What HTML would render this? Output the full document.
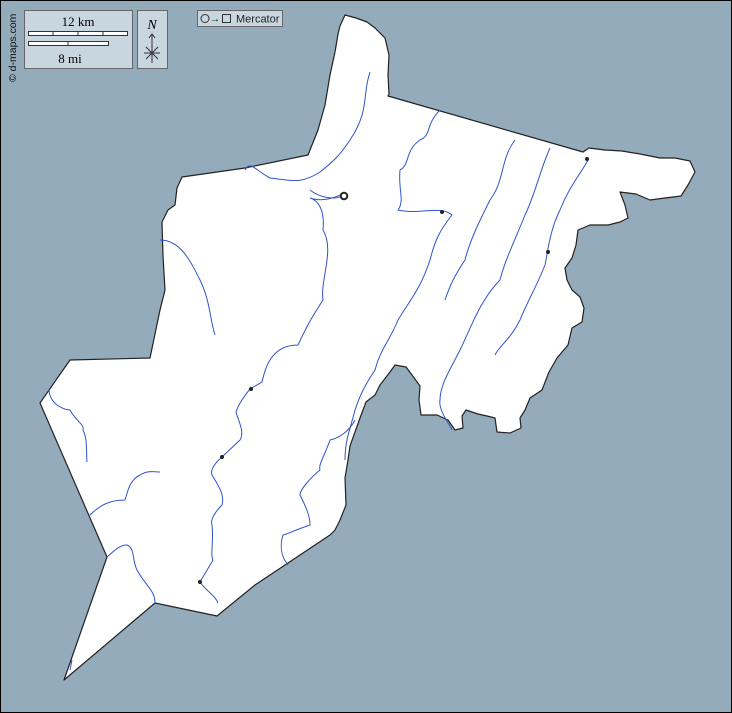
<!DOCTYPE html>
<html><head><meta charset="utf-8"><style>
html,body{margin:0;padding:0;background:#94abbb;}
svg{display:block}
</style></head><body>
<svg width="732" height="713" viewBox="0 0 732 713" xmlns="http://www.w3.org/2000/svg">
<rect x="0" y="0" width="732" height="713" fill="#94abbb"/>
<rect x="0.5" y="0.5" width="731" height="712" fill="none" stroke="#000" stroke-width="1"/>
<path d="M340,26 L345,15 L356,18 L367,22 L375,28 L385,38 L389,55 L388,75 L389,94 L388,96 L583,152 L589,148 L605,150 L622,151 L640,154 L660,158 L675,158 L690,161 L695,172 L688,185 L681,196 L665,198 L650,200 L636,194 L620,192 L625,205 L628,218 L620,222 L608,225 L590,225 L578,230 L576,245 L572,258 L565,268 L567,280 L572,290 L580,297 L584,308 L582,322 L572,328 L568,345 L557,358 L549,372 L542,390 L530,398 L525,410 L520,418 L521,428 L510,433 L497,432 L495,418 L487,416 L478,414 L466,410 L462,416 L463,428 L455,430 L448,420 L437,415 L421,415 L419,400 L420,386 L412,375 L406,367 L395,365 L390,372 L380,385 L375,395 L366,402 L360,418 L355,432 L350,446 L348,460 L345,478 L346,505 L340,520 L335,530 L330,535 L300,555 L285,565 L255,585 L217,616 L155,603 L64,680 L107,557 L40,403 L70,360 L150,358 L160,310 L165,290 L163,256 L162,222 L168,210 L175,205 L177,188 L182,177 L245,168 L308,155 L318,130 L325,105 L330,75 L335,52 L338,34 Z" fill="#fff" stroke="#222" stroke-width="1.2" stroke-linejoin="round"/>
<g fill="none" stroke="#2f54c9" stroke-width="1">
<path d="M370,72 C362,95 370,110 350,140 C340,155 335,160 320,172 C300,185 290,180 270,178 C255,170 250,160 245,170"/>
<path d="M310,190 C320,198 335,200 342,196 C350,188 330,205 310,198 C318,200 325,210 323,230 C335,250 320,280 323,300 C310,320 305,330 298,345 C270,345 265,370 262,382 L250,389 C245,395 238,405 236,412 C238,420 245,432 240,440 L222,457 C215,463 210,470 212,475 C218,485 225,495 222,505 C215,512 210,520 212,525 C214,540 210,555 213,560 L200,582 C205,590 215,595 218,603"/>
<path d="M440,110 C425,125 432,135 420,140 C405,150 410,165 400,170 C398,190 405,200 398,210 C420,215 440,205 452,215 C440,230 435,240 430,260 C420,290 410,300 398,320 C390,340 380,350 375,370 C365,385 360,395 355,410 C350,430 345,440 345,460"/>
<path d="M515,140 C500,160 505,180 490,200 C480,220 470,240 465,260 C455,275 450,285 445,300"/>
<path d="M550,148 C540,170 535,195 525,215 C515,240 505,260 500,280 C480,300 470,330 460,350 C450,370 440,385 440,400 C438,410 450,425 452,430"/>
<path d="M588,160 C580,175 570,185 560,210 C550,230 548,250 545,265 C535,290 528,300 520,320 C510,340 500,345 495,355"/>
<path d="M160,240 C180,240 190,260 200,280 C210,300 210,320 215,335"/>
<path d="M49,390 C50,405 65,410 70,410 C75,420 85,425 83,430 C88,440 86,455 87,462"/>
<path d="M90,515 C100,505 110,500 125,500 C128,490 130,480 140,475 C148,470 155,472 160,472"/>
<path d="M107,557 C115,550 120,545 127,545 C135,548 132,560 137,570 C145,585 155,590 155,603"/>
<path d="M355,420 C350,430 340,438 330,440 C325,455 318,465 320,470 C310,478 300,490 300,495 C305,505 310,515 310,525 C295,530 285,535 283,535 C280,545 280,555 288,565"/>
<path d="M72,660 L70,670"/>
</g>
<g fill="#222">
<circle cx="442" cy="212" r="2"/><circle cx="587" cy="159" r="2"/><circle cx="548" cy="252" r="2"/>
<circle cx="251" cy="389" r="2"/><circle cx="222" cy="457" r="2"/><circle cx="200" cy="582" r="2"/>
</g>
<circle cx="344" cy="196" r="3.3" fill="#fff" stroke="#222" stroke-width="2"/>
<rect x="24.5" y="10.5" width="108" height="58" fill="#c8d6df" stroke="#666"/>
<text x="78" y="26" font-family="Liberation Serif, serif" font-size="13" text-anchor="middle">12 km</text>
<rect x="28.5" y="31.5" width="99" height="4" fill="#fff" stroke="#333"/>
<path d="M53,31v5M78,31v5M103,31v5" stroke="#333"/>
<rect x="28.5" y="41.5" width="80" height="4" fill="#fff" stroke="#333"/>
<path d="M68,41v5" stroke="#333"/>
<text x="70" y="63" font-family="Liberation Serif, serif" font-size="13" text-anchor="middle">8 mi</text>
<rect x="137.5" y="10.5" width="30" height="58" fill="#c8d6df" stroke="#666"/>
<text x="152" y="29" font-family="Liberation Serif, serif" font-style="italic" font-size="14" text-anchor="middle">N</text>
<path d="M152,34v29M144,53h16M146,47l12,12M158,47l-12,12M149,38l3,-4l3,4" stroke="#333" fill="none"/>
<rect x="197.5" y="10.5" width="85" height="16" fill="#c8d6df" stroke="#666"/>
<circle cx="205" cy="18.5" r="4" fill="none" stroke="#333"/>
<text x="210" y="22" font-family="Liberation Sans, sans-serif" font-size="10">→</text>
<rect x="222.5" y="14.5" width="8" height="8" fill="none" stroke="#333"/>
<text x="236" y="22.5" font-family="Liberation Sans, sans-serif" font-size="11" fill="#222">Mercator</text>
<text transform="translate(16,82) rotate(-90)" font-family="Liberation Sans, sans-serif" font-size="10.5" fill="#111">© d-maps.com</text>
</svg>
</body></html>
